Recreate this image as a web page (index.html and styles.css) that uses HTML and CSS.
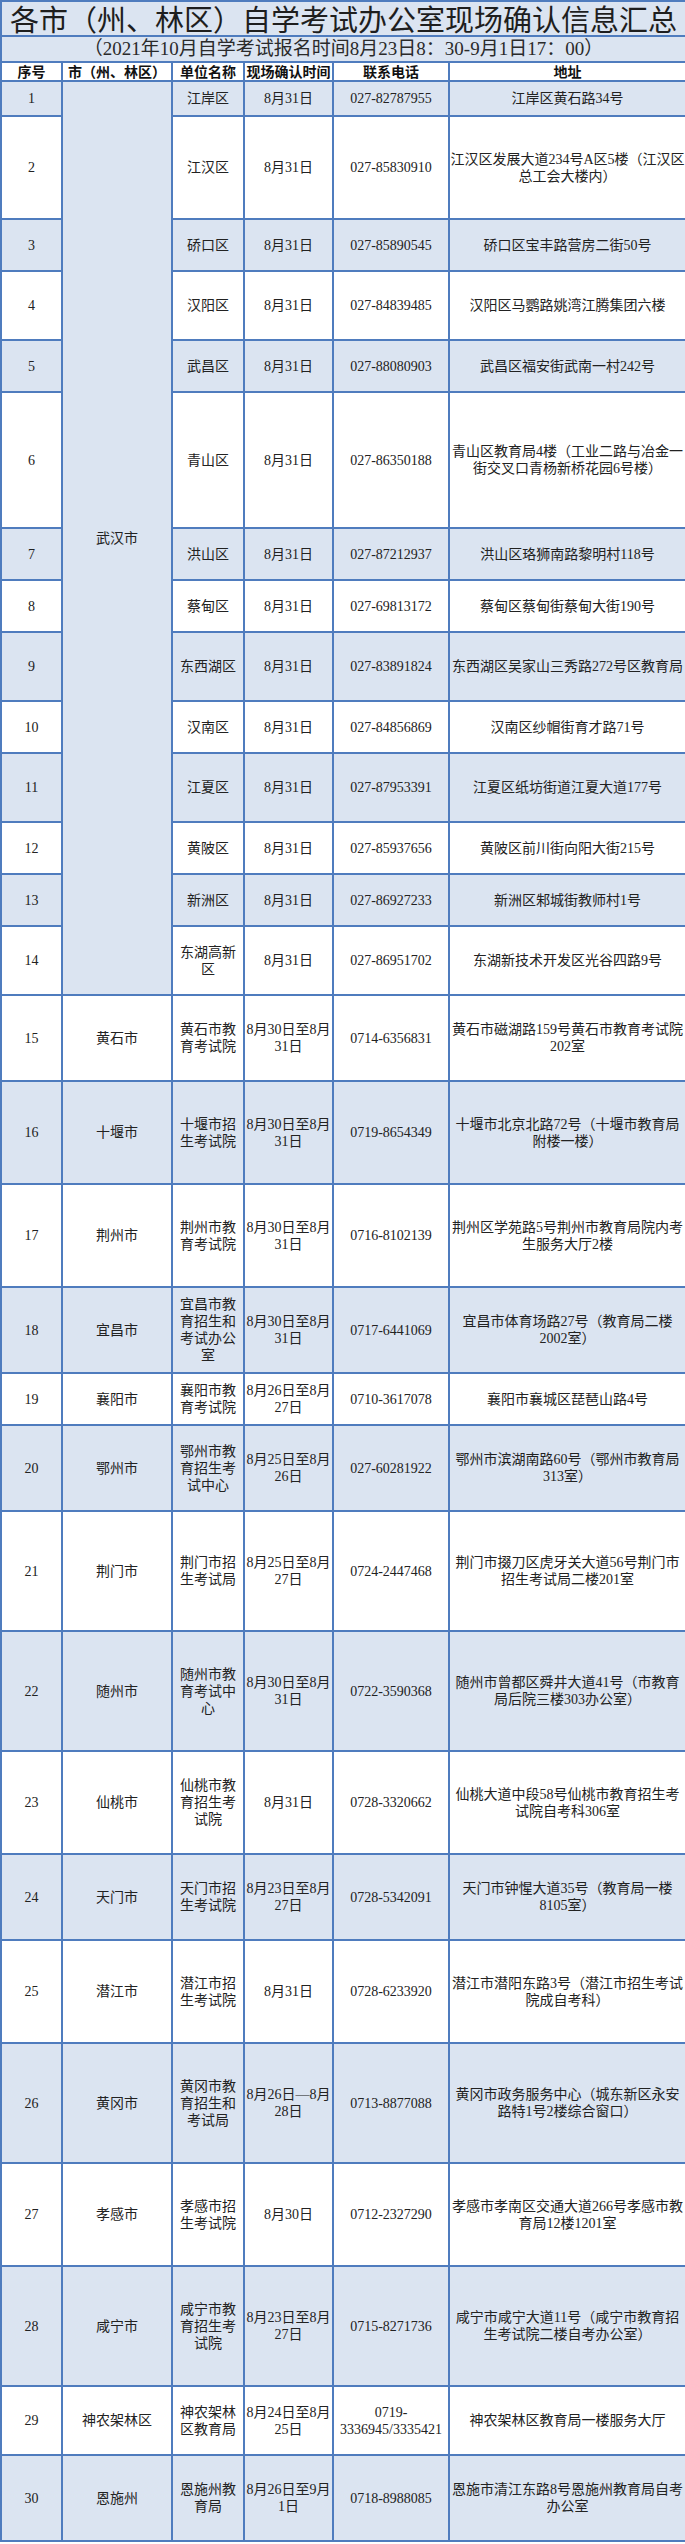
FILE: index.html
```html
<!DOCTYPE html>
<html lang="zh-CN">
<head>
<meta charset="utf-8">
<title>各市（州、林区）自学考试办公室现场确认信息汇总</title>
<link rel="stylesheet" href="styles.css">
</head>
<body>
<table class="sheet">
  <colgroup>
    <col class="w-no"><col class="w-city"><col class="w-unit"><col class="w-time"><col class="w-tel"><col class="w-addr">
  </colgroup>
  <tbody>
    <tr class="r-title"><td colspan="6" class="title last">各市（州、林区）自学考试办公室现场确认信息汇总</td></tr>
    <tr class="r-sub"><td colspan="6" class="subtitle last">（2021年10月自学考试报名时间8月23日8：30-9月1日17：00）</td></tr>
    <tr class="r-head">
      <td class="head">序号</td><td class="head">市（州、林区）</td><td class="head">单位名称</td><td class="head">现场确认时间</td><td class="head">联系电话</td><td class="head last">地址</td>
    </tr>
    <tr class="h35 alt"><td>1</td><td rowspan="14" class="city-wh">武汉市</td><td>江岸区</td><td>8月31日</td><td>027-82787955</td><td class="last">江岸区黄石路34号</td></tr>
    <tr class="h103"><td>2</td><td>江汉区</td><td>8月31日</td><td>027-85830910</td><td class="last">江汉区发展大道234号A区5楼（江汉区<br>总工会大楼内）</td></tr>
    <tr class="h52 alt"><td>3</td><td>硚口区</td><td>8月31日</td><td>027-85890545</td><td class="last">硚口区宝丰路营房二街50号</td></tr>
    <tr class="h69"><td>4</td><td>汉阳区</td><td>8月31日</td><td>027-84839485</td><td class="last">汉阳区马鹦路姚湾江腾集团六楼</td></tr>
    <tr class="h52 alt"><td>5</td><td>武昌区</td><td>8月31日</td><td>027-88080903</td><td class="last">武昌区福安街武南一村242号</td></tr>
    <tr class="h136"><td>6</td><td>青山区</td><td>8月31日</td><td>027-86350188</td><td class="last">青山区教育局4楼（工业二路与冶金一<br>街交叉口青杨新桥花园6号楼）</td></tr>
    <tr class="h52 alt"><td>7</td><td>洪山区</td><td>8月31日</td><td>027-87212937</td><td class="last">洪山区珞狮南路黎明村118号</td></tr>
    <tr class="h52"><td>8</td><td>蔡甸区</td><td>8月31日</td><td>027-69813172</td><td class="last">蔡甸区蔡甸街蔡甸大街190号</td></tr>
    <tr class="h69 alt"><td>9</td><td>东西湖区</td><td>8月31日</td><td>027-83891824</td><td class="last">东西湖区吴家山三秀路272号区教育局</td></tr>
    <tr class="h52"><td>10</td><td>汉南区</td><td>8月31日</td><td>027-84856869</td><td class="last">汉南区纱帽街育才路71号</td></tr>
    <tr class="h69 alt"><td>11</td><td>江夏区</td><td>8月31日</td><td>027-87953391</td><td class="last">江夏区纸坊街道江夏大道177号</td></tr>
    <tr class="h52"><td>12</td><td>黄陂区</td><td>8月31日</td><td>027-85937656</td><td class="last">黄陂区前川街向阳大街215号</td></tr>
    <tr class="h52 alt"><td>13</td><td>新洲区</td><td>8月31日</td><td>027-86927233</td><td class="last">新洲区邾城街教师村1号</td></tr>
    <tr class="h69"><td>14</td><td>东湖高新<br>区</td><td>8月31日</td><td>027-86951702</td><td class="last">东湖新技术开发区光谷四路9号</td></tr>
    <tr class="h86"><td>15</td><td>黄石市</td><td>黄石市教<br>育考试院</td><td>8月30日至8月<br>31日</td><td>0714-6356831</td><td class="last">黄石市磁湖路159号黄石市教育考试院<br>202室</td></tr>
    <tr class="h103 alt"><td>16</td><td>十堰市</td><td>十堰市招<br>生考试院</td><td>8月30日至8月<br>31日</td><td>0719-8654349</td><td class="last">十堰市北京北路72号（十堰市教育局<br>附楼一楼）</td></tr>
    <tr class="h103"><td>17</td><td>荆州市</td><td>荆州市教<br>育考试院</td><td>8月30日至8月<br>31日</td><td>0716-8102139</td><td class="last">荆州区学苑路5号荆州市教育局院内考<br>生服务大厅2楼</td></tr>
    <tr class="h86 alt"><td>18</td><td>宜昌市</td><td>宜昌市教<br>育招生和<br>考试办公<br>室</td><td>8月30日至8月<br>31日</td><td>0717-6441069</td><td class="last">宜昌市体育场路27号（教育局二楼<br>2002室）</td></tr>
    <tr class="h52"><td>19</td><td>襄阳市</td><td>襄阳市教<br>育考试院</td><td>8月26日至8月<br>27日</td><td>0710-3617078</td><td class="last">襄阳市襄城区琵琶山路4号</td></tr>
    <tr class="h86 alt"><td>20</td><td>鄂州市</td><td>鄂州市教<br>育招生考<br>试中心</td><td>8月25日至8月<br>26日</td><td>027-60281922</td><td class="last">鄂州市滨湖南路60号（鄂州市教育局<br>313室）</td></tr>
    <tr class="h120"><td>21</td><td>荆门市</td><td>荆门市招<br>生考试局</td><td>8月25日至8月<br>27日</td><td>0724-2447468</td><td class="last">荆门市掇刀区虎牙关大道56号荆门市<br>招生考试局二楼201室</td></tr>
    <tr class="h120 alt"><td>22</td><td>随州市</td><td>随州市教<br>育考试中<br>心</td><td>8月30日至8月<br>31日</td><td>0722-3590368</td><td class="last">随州市曾都区舜井大道41号（市教育<br>局后院三楼303办公室）</td></tr>
    <tr class="h103"><td>23</td><td>仙桃市</td><td>仙桃市教<br>育招生考<br>试院</td><td>8月31日</td><td>0728-3320662</td><td class="last">仙桃大道中段58号仙桃市教育招生考<br>试院自考科306室</td></tr>
    <tr class="h86 alt"><td>24</td><td>天门市</td><td>天门市招<br>生考试院</td><td>8月23日至8月<br>27日</td><td>0728-5342091</td><td class="last">天门市钟惺大道35号（教育局一楼<br>8105室）</td></tr>
    <tr class="h103"><td>25</td><td>潜江市</td><td>潜江市招<br>生考试院</td><td>8月31日</td><td>0728-6233920</td><td class="last">潜江市潜阳东路3号（潜江市招生考试<br>院成自考科）</td></tr>
    <tr class="h120 alt"><td>26</td><td>黄冈市</td><td>黄冈市教<br>育招生和<br>考试局</td><td>8月26日—8月<br>28日</td><td>0713-8877088</td><td class="last">黄冈市政务服务中心（城东新区永安<br>路特1号2楼综合窗口）</td></tr>
    <tr class="h103"><td>27</td><td>孝感市</td><td>孝感市招<br>生考试院</td><td>8月30日</td><td>0712-2327290</td><td class="last">孝感市孝南区交通大道266号孝感市教<br>育局12楼1201室</td></tr>
    <tr class="h120 alt"><td>28</td><td>咸宁市</td><td>咸宁市教<br>育招生考<br>试院</td><td>8月23日至8月<br>27日</td><td>0715-8271736</td><td class="last">咸宁市咸宁大道11号（咸宁市教育招<br>生考试院二楼自考办公室）</td></tr>
    <tr class="h69"><td>29</td><td>神农架林区</td><td>神农架林<br>区教育局</td><td>8月24日至8月<br>25日</td><td>0719-<br>3336945/3335421</td><td class="last">神农架林区教育局一楼服务大厅</td></tr>
    <tr class="h86 alt"><td>30</td><td>恩施州</td><td>恩施州教<br>育局</td><td>8月26日至9月<br>1日</td><td>0718-8988085</td><td class="last">恩施市清江东路8号恩施州教育局自考<br>办公室</td></tr>
  </tbody>
</table>
</body>
</html>
```
FILE: styles.css
```css
html, body {
  margin: 0;
  padding: 0;
  background: #ffffff;
}
body {
  font-family: "Liberation Serif", "Noto Sans CJK SC", serif;
  color: #222222;
  overflow-x: hidden;
}
.sheet {
  width: 685px;
  table-layout: fixed;
  border-collapse: separate;
  border-spacing: 0;
}
.w-no { width: 63px; }
.w-city { width: 110px; }
.w-unit { width: 72px; }
.w-time { width: 89px; }
.w-tel { width: 116px; }
.w-addr { width: 235px; }

.sheet td {
  padding: 0;
  border-right: 2px solid #4f7cbe;
  border-bottom: 2px solid #4f7cbe;
  text-align: center;
  vertical-align: middle;
  font-size: 14px;
  line-height: 17px;
  white-space: nowrap;
  background: #ffffff;
}
.sheet td:first-child {
  border-left: 2px solid #4f7cbe;
}
.sheet td.last {
  border-right: none;
}
.sheet tr.alt td,
.sheet td.city-wh {
  background: #dbe4f1;
}

.r-title { height: 37px; }
.r-sub { height: 26px; }
.r-head { height: 19px; }

.sheet td.title {
  border-top: 2px solid #4f7cbe;
  background: #dbe4f1;
  font-family: "Noto Sans CJK SC", sans-serif;
  font-size: 29px;
  line-height: 33px;
  color: #1e1e1e;
}
.sheet td.subtitle {
  background: #dbe4f1;
  font-size: 19px;
  line-height: 22px;
  color: #2a2a2a;
}
.sheet td.head {
  font-family: "Noto Sans CJK SC", sans-serif;
  font-weight: bold;
  font-size: 14px;
  line-height: 15px;
  color: #111111;
}

.h35 { height: 35px; }
.h52 { height: 52px; }
.h69 { height: 69px; }
.h86 { height: 86px; }
.h103 { height: 103px; }
.h120 { height: 120px; }
.h136 { height: 136px; }
```
